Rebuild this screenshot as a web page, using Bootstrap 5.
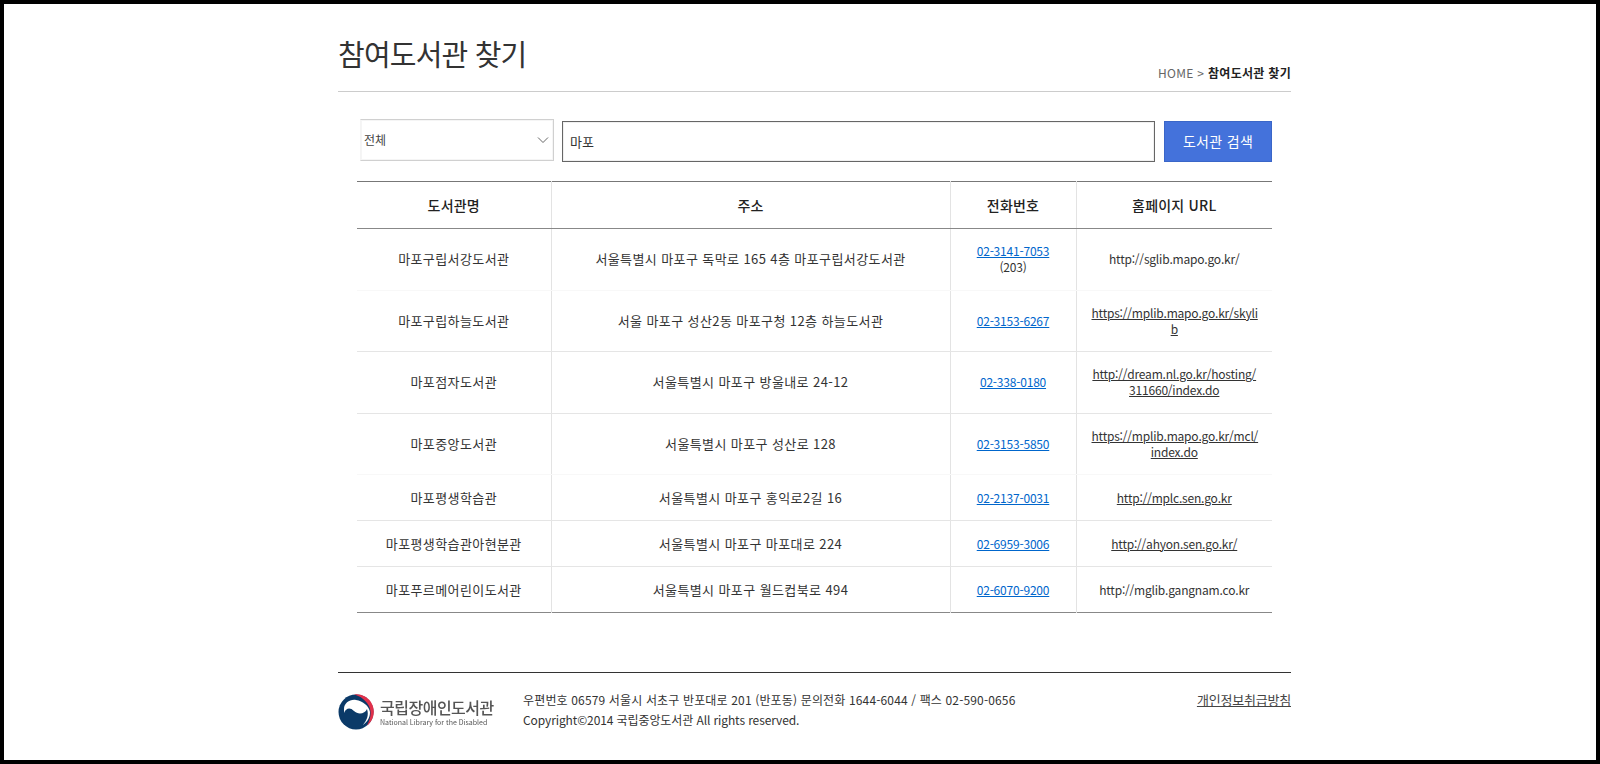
<!DOCTYPE html>
<html lang="ko">
<head>
<meta charset="utf-8">
<title>참여도서관 찾기</title>
<link href="https://cdn.jsdelivr.net/npm/bootstrap@5.3.0/dist/css/bootstrap.min.css" rel="stylesheet">
<style>
html,body{height:100%;}
body{border:4px solid #000;background:#fff;color:#333;overflow:hidden;font-family:"Noto Sans CJK KR","Noto Sans",sans-serif;font-size:13px;line-height:16px;}
.pagewrap{width:953px;margin-left:334px;}
.headbar{height:88px;border-bottom:1px solid #ccc;}
.pagetitle{font-size:29px;line-height:44px;margin:0;padding-top:27px;color:#333;font-weight:400;letter-spacing:-.8px;height:87px;}
.crumbs{font-size:12px;line-height:14px;padding-bottom:11px;color:#666;letter-spacing:.3px;}
.crumbs b{color:#222;font-weight:700;}
.searchbar{padding:27px 19px 0 22px;height:89px;gap:9px;}
.form-select.sel-lib{width:194px;height:42px;flex:none;margin-right:-1px;border:1px solid #d0d0d0;border-left-color:#f4f4f4;border-radius:0;padding:0 24px 0 3px;font-size:12px;color:#444;box-shadow:inset 0 0 0 1px #f5f5f5;background-image:url("data:image/svg+xml,%3csvg xmlns='http://www.w3.org/2000/svg' viewBox='0 0 12 8'%3e%3cpath fill='none' stroke='%23555' stroke-width='.9' d='M1 1.500l5 5 5-5'/%3e%3c/svg%3e");background-size:12px 8px;background-position:right 4px center;}
.form-control.inp-lib{height:41px;margin-top:2px;border:1px solid #666;border-radius:0;font-size:13px;padding:0 7px;color:#333;box-shadow:inset 0 0 0 1px #f0f0f0;}
.btn.btn-find{width:108px;height:41px;margin-top:2px;flex:none;background:#4472db;border:1px solid #3a66c8;border-radius:0;color:#fff;font-size:14px;padding:0;letter-spacing:.3px;}
.tablewrap{padding:0 19px;}
.table.libtable{width:915px;table-layout:fixed;margin:0;border-top:1px solid #777;border-bottom:1px solid #888;text-align:center;color:#333;font-size:13px;line-height:16px;letter-spacing:.4px;--bs-table-color:#333;}
.libtable th,.libtable td{vertical-align:middle;padding:0 15px;border-bottom:1px solid #e5e5e5;border-left:1px solid #e3e3e3;font-weight:400;white-space:nowrap;}
.libtable th:first-child,.libtable td:first-child{border-left:0;}
.libtable thead th{height:47px;font-size:14px;font-weight:500;color:#222;border-bottom:1px solid #888;letter-spacing:.2px;}
.libtable tr.rowtall td{height:61.5px;}
.libtable tr.rowshort td{height:46px;}
.libtable tr.softline td{border-bottom-color:#f8f8f8;}
.libtable tr:last-child td{border-bottom:0;}
.libtable .c1{width:194px;}.libtable .c2{width:399px;}.libtable .c3{width:126px;}.libtable .c4{width:196px;}
.libtable td:nth-child(3),.libtable td:nth-child(4){font-size:12px;letter-spacing:-.2px;}
.tel{color:#06c;text-decoration:underline;}
.web{color:#333;text-decoration:underline;}
.footbar{margin-top:59px;border-top:1px solid #333;height:80px;padding-top:17px;}
.brandbox{width:185px;flex:none;padding-top:4px;}
.brandtext{margin-left:6px;color:#555;filter:blur(.3px);}
.brandname{font-size:16px;line-height:18px;font-weight:500;letter-spacing:-.5px;white-space:nowrap;}
.brandsub{font-size:7px;line-height:10px;white-space:nowrap;margin-top:1px;}
.footinfo{line-height:20px;color:#333;font-size:12px;}
.infoa{letter-spacing:.15px;}
.infob{letter-spacing:-.1px;}
.privacy{color:#444;text-decoration:underline;font-size:13px;line-height:20px;margin-left:auto;letter-spacing:-.2px;}
</style>
</head>
<body>
<div class="pagewrap">
  <header class="headbar d-flex justify-content-between align-items-end">
    <h1 class="pagetitle">참여도서관 찾기</h1>
    <div class="crumbs">HOME &gt; <b>참여도서관 찾기</b></div>
  </header>
  <form class="searchbar d-flex align-items-start">
    <select class="form-select sel-lib" aria-label="지역"><option>전체</option></select>
    <input class="form-control inp-lib" type="text" value="마포" aria-label="검색어">
    <button class="btn btn-find" type="button">도서관 검색</button>
  </form>
  <div class="tablewrap">
    <table class="table libtable">
      <thead>
        <tr><th class="c1">도서관명</th><th class="c2">주소</th><th class="c3">전화번호</th><th class="c4">홈페이지 URL</th></tr>
      </thead>
      <tbody>
        <tr class="rowtall softline"><td>마포구립서강도서관</td><td>서울특별시 마포구 독막로 165 4층 마포구립서강도서관</td><td><a class="tel" href="#">02-3141-7053</a><br>(203)</td><td>http://sglib.mapo.go.kr/</td></tr>
        <tr class="rowtall"><td>마포구립하늘도서관</td><td>서울 마포구 성산2동 마포구청 12층 하늘도서관</td><td><a class="tel" href="#">02-3153-6267</a></td><td><a class="web" href="#">https://mplib.mapo.go.kr/skyli<br>b</a></td></tr>
        <tr class="rowtall"><td>마포점자도서관</td><td>서울특별시 마포구 방울내로 24-12</td><td><a class="tel" href="#">02-338-0180</a></td><td><a class="web" href="#">http://dream.nl.go.kr/hosting/<br>311660/index.do</a></td></tr>
        <tr class="rowtall softline"><td>마포중앙도서관</td><td>서울특별시 마포구 성산로 128</td><td><a class="tel" href="#">02-3153-5850</a></td><td><a class="web" href="#">https://mplib.mapo.go.kr/mcl/<br>index.do</a></td></tr>
        <tr class="rowshort"><td>마포평생학습관</td><td>서울특별시 마포구 홍익로2길 16</td><td><a class="tel" href="#">02-2137-0031</a></td><td><a class="web" href="#">http://mplc.sen.go.kr</a></td></tr>
        <tr class="rowshort"><td>마포평생학습관아현분관</td><td>서울특별시 마포구 마포대로 224</td><td><a class="tel" href="#">02-6959-3006</a></td><td><a class="web" href="#">http://ahyon.sen.go.kr/</a></td></tr>
        <tr class="rowshort"><td>마포푸르메어린이도서관</td><td>서울특별시 마포구 월드컵북로 494</td><td><a class="tel" href="#">02-6070-9200</a></td><td>http://mglib.gangnam.co.kr</td></tr>
      </tbody>
    </table>
  </div>
  <footer class="footbar d-flex align-items-start">
    <div class="brandbox d-flex align-items-center">
      <svg width="36" height="36" viewBox="0 0 36 36" aria-hidden="true">
        <circle cx="18" cy="18" r="17.500" fill="#0b3a68"/>
        <path d="M6 15C6 9 12 5 18 6C25 7 31 12 32 18C32 24 29 28 25 31C29 26 31 21 29 15C27 20 20 21 16 17C12 13 8 14 6 19Z" fill="#fff"/>
        <path d="M16 .3A17.500 17.500 0 0 1 29 31.500C33 24 34.500 16 29 9C25 4 21 2 16 .3Z" fill="#e0304a"/>
      </svg>
      <div class="brandtext">
        <div class="brandname">국립장애인도서관</div>
        <div class="brandsub">National Library for the Disabled</div>
      </div>
    </div>
    <div class="footinfo">
      <span class="infoa">우편번호 06579 서울시 서초구 반포대로 201 (반포동) 문의전화 1644-6044 / 팩스 02-590-0656</span><br>
      <span class="infob">Copyright©2014 국립중앙도서관 All rights reserved.</span>
    </div>
    <a class="privacy" href="#">개인정보취급방침</a>
  </footer>
</div>
<script src="https://cdn.jsdelivr.net/npm/bootstrap@5.3.0/dist/js/bootstrap.bundle.min.js"></script>
</body>
</html>
